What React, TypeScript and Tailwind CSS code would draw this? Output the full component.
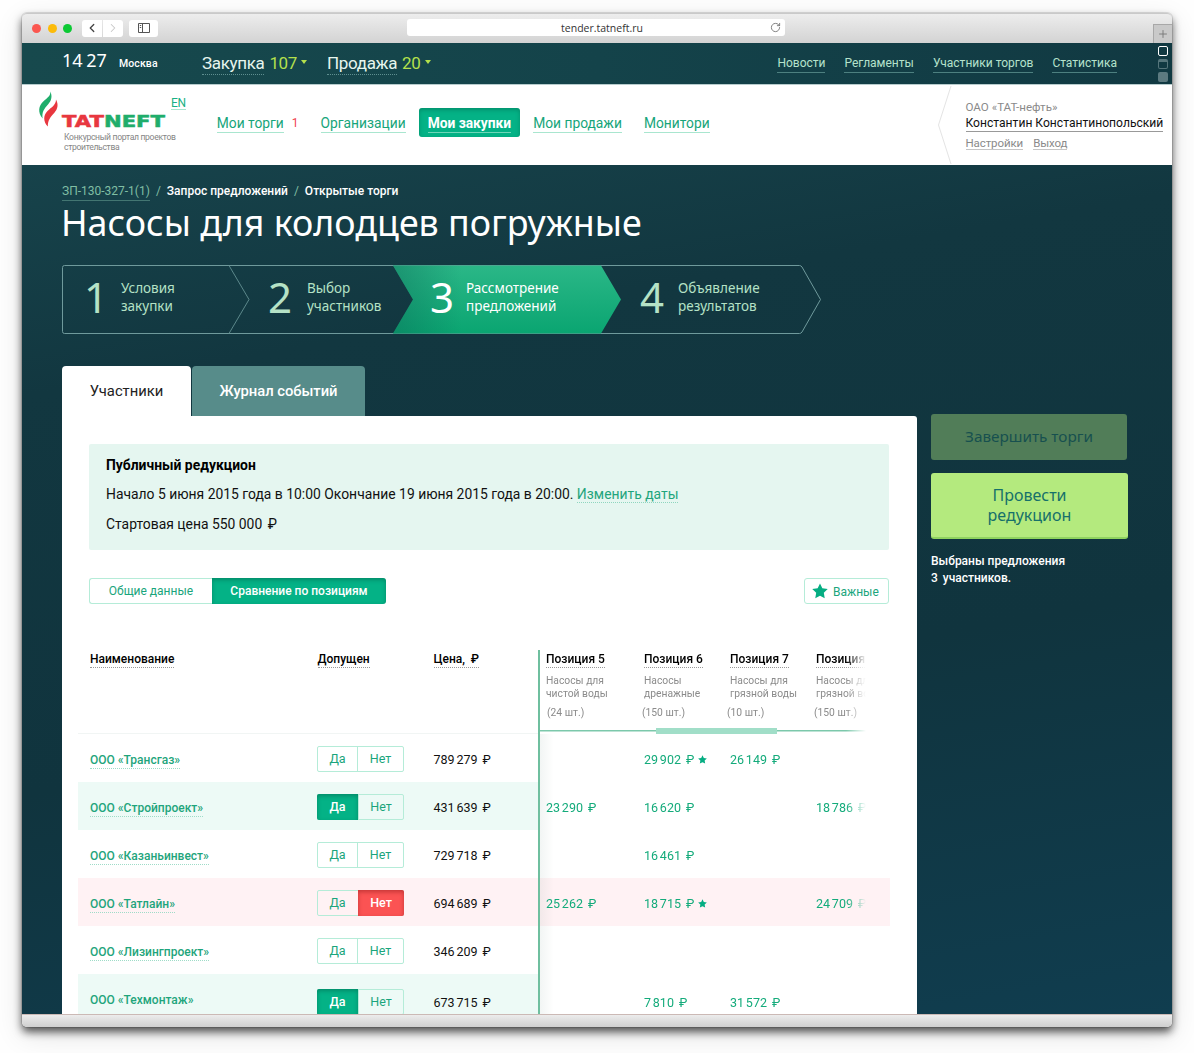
import { ReactNode } from "react";
import { ChevronLeft, ChevronRight, Plus, RotateCw } from "lucide-react";

const company = ["Новости", "Регламенты", "Участники торгов", "Статистика"];

const rows = [
  { name: "ООО «Трансгаз»", price: "789 279", allowed: null, bids: ["", "29 902*", "26 149", ""] },
  { name: "ООО «Стройпроект»", price: "431 639", allowed: true, bids: ["23 290", "16 620", "", "18 786"] },
  { name: "ООО «Казаньинвест»", price: "729 718", allowed: null, bids: ["", "16 461", "", ""] },
  { name: "ООО «Татлайн»", price: "694 689", allowed: false, bids: ["25 262", "18 715*", "", "24 709"] },
  { name: "ООО «Лизингпроект»", price: "346 209", allowed: null, bids: ["", "", "", ""] },
  { name: "ООО «Техмонтаж»", price: "673 715", allowed: true, bids: ["", "7 810", "31 572", ""] },
];

const positions = [
  { title: "Позиция 5", text: ["Насосы для", "чистой воды"], count: "(24 шт.)", shift: "ml-px" },
  { title: "Позиция 6", text: ["Насосы", "дренажные"], count: "(150 шт.)", shift: "-ml-0.5" },
  { title: "Позиция 7", text: ["Насосы для", "грязной воды"], count: "(10 шт.)", shift: "-ml-[3px]" },
  { title: "Позиция 8", text: ["Насосы для", "грязной воды"], count: "(150 шт.)", shift: "-ml-0.5" },
];

const fade = "[mask-image:linear-gradient(to_right,#000_306px,transparent_326px)]";
const exo = "font-['Noto_Sans',sans-serif]";

const Star = ({ className }: { className: string }) => (
  <svg viewBox="0 0 24 24" className={className} fill="currentColor">
    <path d="M12 0.6l3.5 7.4 8.1 1.1-5.9 5.7 1.4 8.1L12 19l-7.1 3.9 1.4-8.1L.4 9.1 8.5 8z" />
  </svg>
);

const Money = ({ children }: { children: ReactNode }) => (
  <span className="whitespace-nowrap text-[12.5px] [word-spacing:-1.3px]">
    {children}
    <span className="ml-[5px]">₽</span>
  </span>
);

const TitleBar = () => (
  <div className="flex h-[30px] shrink-0 rounded-t-[5px] border-t border-[#c9c9c9] bg-gradient-to-b from-[#ededed] to-[#d3d3d3] pl-2.5">
    <div className="flex h-7 items-center">
      <span className="size-[9px] rounded-full bg-[#fb5750]" />
      <span className="ml-[6.5px] size-[9px] rounded-full bg-[#fcbb09]" />
      <span className="ml-[6.5px] size-[9px] rounded-full bg-[#0cc934]" />
      <span className="ml-[10px] flex h-[17px] w-5 items-center justify-center rounded-l-[3px] bg-white">
        <ChevronLeft className="size-3.5 text-[#444]" strokeWidth={2.2} />
      </span>
      <span className="ml-px flex h-[17px] w-5 items-center justify-center rounded-r-[3px] bg-white">
        <ChevronRight className="size-3.5 text-[#c8c8c8]" strokeWidth={1.8} />
      </span>
      <span className="ml-1.5 flex h-[17px] w-[29px] items-center justify-center rounded-[3px] bg-white">
        <svg className="h-2.5 w-3" viewBox="0 0 12 10" fill="none" stroke="#555">
          <path d="M.5.5h11v9H.5zM4.5.5v9M1.8 2.5h1.4M1.8 4.5h1.4" />
        </svg>
      </span>
    </div>
    <div className="ml-[249px] mt-[5px] flex h-[17px] w-[378px] items-center rounded-[3px] bg-white pr-1">
      <span className="ml-[27px] flex-1 pt-0.5 text-center font-['Open_Sans',sans-serif] text-[10.5px] text-[#333]">tender.tatneft.ru</span>
      <RotateCw className="size-[11px] text-[#777]" strokeWidth={2} />
    </div>
    <div className="ml-auto mt-2.5 flex h-[19px] w-[19px] items-center justify-center border-l border-t border-[#a8a8a8] bg-[#c9c9c9]">
      <Plus className="size-3 text-[#777]" strokeWidth={1.8} />
    </div>
  </div>
);

const Counter = ({ label, count }: { label: string; count: number }) => (
  <div className="flex items-start text-[17px] leading-[22px] tracking-[-0.35px]">
    <span className="border-b border-dotted border-[#5f8f90] text-[#e6f5ee]">{label}</span>
    <span className="ml-[5px] text-[#b4e04c]">{count}</span>
    <span className="ml-1 mt-[8px] border-x-[3.5px] border-t-4 border-x-transparent border-t-[#b4e04c]" />
  </div>
);

const TopBar = () => (
  <div className="flex h-[41px] shrink-0 bg-gradient-to-r from-[#17494d] via-[#14434a] to-[#113942] pl-10">
    <span className={`w-[57px] pt-[5px] text-[18px] leading-6 text-white [word-spacing:-1px] ${exo}`}>14 27</span>
    <span className="w-[83px] pt-[13px] text-[10.5px] font-medium leading-4 tracking-[0.1px] text-white">Москва</span>
    <div className="flex gap-[20px] pt-[9px]">
      <Counter label="Закупка" count={107} />
      <Counter label="Продажа" count={20} />
    </div>
    <div className="ml-auto mr-[41px] flex gap-[19px] pt-[12px]">
      {company.map((item) => (
        <a key={item} className="h-[18px] border-b border-[#4d8080] text-[12px] leading-[17px] text-[#b5e2cc]">{item}</a>
      ))}
    </div>
    <div className="flex w-[14px] flex-col gap-[3px] pt-[3px]">
      <span className="size-2.5 rounded-[2px] border border-white" />
      <span className="size-2.5 rounded-[2px] border border-t-[3px] border-[#55757b]" />
      <span className="size-2.5 rounded-[2px] bg-[#5c7a80]" />
    </div>
  </div>
);

const NavLink = ({ children }: { children: ReactNode }) => (
  <a className="h-5 border-b border-[#a9e6cf] text-[13.8px] leading-[20px] text-[#16a57a]">{children}</a>
);

const Header = () => (
  <div className="flex h-[81px] shrink-0 border-t border-[#b7cccd] bg-white pl-4">
    <div className="w-[133px] pt-[6px]">
      <svg width="130" height="42" viewBox="0 0 130 42" overflow="visible">
        <path d="M12.3 0.5C14.6 5.5 13.4 9.6 10.2 13.2C6 17.7 3.6 21.5 4.7 27.5C-.6 21.5 .5 14.6 5.5 10.2C9.3 6.8 12.7 5.2 12.3 .5Z" fill="#1fad6b" />
        <path d="M18 8.5C20.8 14 19.6 18 16.4 21.8C12.6 26 9.5 29.5 9.9 35.6C5 30.5 5.2 24.5 9.5 20C13.5 16.2 18 14 18 8.5Z" fill="#e8373f" />
        <text x="24" y="35.8" textLength="103" lengthAdjust="spacingAndGlyphs" fontSize="15.4" fontWeight="bold" fontFamily="DejaVu Sans" strokeWidth="0.5">
          <tspan fill="#e8373f" stroke="#e8373f">TAT</tspan>
          <tspan fill="#1fad6b" stroke="#1fad6b">NEFT</tspan>
        </text>
      </svg>
      <p className="-mt-px whitespace-nowrap pl-[26px] text-[8.6px] leading-[10px] tracking-[-0.32px] text-[#858585]">
        Конкурсный портал проектов
        <br />
        строительства
      </p>
    </div>
    <a className="mt-[10px] h-[15px] border-b border-[#a9e6cf] text-[12px] leading-[17px] tracking-[-0.3px] text-[#19b184]">EN</a>
    <nav className="ml-[31px] flex pt-[28px]">
      <NavLink>Мои торги</NavLink>
      <span className="ml-2 text-[12px] leading-[21px] text-[#f04450]">1</span>
      <span className="w-[22px]" />
      <NavLink>Организации</NavLink>
      <span className="-mt-[5px] ml-[13px] mr-[13px] flex h-[29px] w-[101.500px] justify-center rounded-[3px] bg-[#04b286] pt-[5px] shadow-[inset_0_2px_4px_rgba(0,80,60,0.35)]">
        <a className="h-5 whitespace-nowrap border-b border-[#6fd6b8] text-[13.8px] font-bold leading-[20px] tracking-[-0.05px] text-white">Мои закупки</a>
      </span>
      <NavLink>Мои продажи</NavLink>
      <span className="w-[22px]" />
      <NavLink>Монитори</NavLink>
    </nav>
    <svg width="16" height="80" viewBox="0 0 16 80" className="ml-auto" fill="none" stroke="#e4e4e4">
      <path d="M14 1L1.500 40L14 79" />
    </svg>
    <div className="w-[219px] whitespace-nowrap pl-[12.500px] pt-[14px] text-[11.6px] leading-4 text-[#8a8a8a]">
      <div>ОАО «ТАТ-нефть»</div>
      <div className="flex">
        <a className="h-[17px] border-b border-[#999] text-[12.1px] leading-[17px] text-[#111]">Константин Константинопольский</a>
      </div>
      <div className="mt-[3px] flex gap-2.5 tracking-[-0.1px]">
        <a className="h-[15px] border-b border-[#c5c5c5] text-[11.500px]">Настройки</a>
        <a className="h-[15px] border-b border-[#c5c5c5] text-[11.500px]">Выход</a>
      </div>
    </div>
  </div>
);

const Step = ({ n, lines, active, className }: { n: number; lines: string[]; active?: boolean; className: string }) => (
  <div className={`relative flex ${className} ${active ? "text-white" : "text-[#b5e2c6]"} ${exo}`}>
    <span className="pt-[8px] text-[42px] leading-[48px]">{n}</span>
    <span className="absolute left-[37px] pt-[15px] text-[13.5px] leading-[17.5px]">
      {lines[0]}
      <br />
      {lines[1]}
    </span>
  </div>
);

const Steps = () => (
  <div className="relative mt-[19px] flex h-[69px] w-[760px]">
    <svg className="absolute inset-0" width="760" height="69" viewBox="0 0 760 69" fill="none">
      <defs>
        <linearGradient id="active" x1="0" y1="0" x2="0" y2="1">
          <stop stopColor="#2bb787" />
          <stop offset="1" stopColor="#0aa571" />
        </linearGradient>
        <linearGradient id="shade" x1="0" x2="1">
          <stop stopColor="#0b6b58" stopOpacity=".45" />
          <stop offset=".3" stopColor="#0b6b58" stopOpacity="0" />
        </linearGradient>
      </defs>
      <path d="M2.500.5H737.500Q739 .5 740 2L758.500 34.500L740 67Q739 68.500 737.500 68.500H2.500Q.5 68.500 .5 66.500V2.500Q.5 .5 2.500 .5Z" stroke="#6f9a9c" />
      <path d="M167 .5L187 34.500L167 68.500" stroke="#5c888b" />
      <path d="M331 .5H539L559 34.500L539 68.500H331L351 34.500Z" fill="url(#active)" />
      <path d="M331 .5H539L559 34.500L539 68.500H331L351 34.500Z" fill="url(#shade)" />
    </svg>
    <Step n={1} lines={["Условия", "закупки"]} className="ml-[22px] w-[184px]" />
    <Step n={2} lines={["Выбор", "участников"]} className="w-[162px] [&>span:last-child]:left-[39px]" />
    <Step n={3} lines={["Рассмотрение", "предложений"]} active className="w-[210px] [&>span:last-child]:left-[36px]" />
    <Step n={4} lines={["Объявление", "результатов"]} className="w-[180px] tracking-[0.05px] [&>span:last-child]:left-[38px]" />
  </div>
);

const YesNo = ({ value }: { value: boolean | null }) => (
  <div className="flex h-[26px] w-[87px] rounded-[2px] border border-[#b5ecd8] text-center text-[12.5px] leading-6 text-[#1aa57c]">
    <span
      className={
        value === true
          ? "-my-px -ml-px w-[41px] rounded-l-[2px] bg-[#04b286] pt-px font-medium text-white shadow-[inset_0_2px_4px_rgba(0,80,60,0.4)]"
          : "w-[39px]"
      }
    >
      Да
    </span>
    <span
      className={
        value === false
          ? "-my-px -mr-px ml-px flex-1 rounded-r-[2px] bg-[#fb5353] pt-px font-medium text-white shadow-[inset_0_2px_4px_rgba(130,20,20,0.45)]"
          : "flex-1 border-l border-[#b5ecd8]"
      }
    >
      Нет
    </span>
  </div>
);

const TableHead = () => (
  <div className="flex h-[84px]">
    <div className="flex w-[460px] border-b border-[#f1f5f4] pl-3 text-[12px] font-medium leading-[18px] text-black">
      <div className="w-[227.500px]"><span className="border-b border-dotted border-[#999] pb-px">Наименование</span></div>
      <div className="w-[116px]"><span className="border-b border-dotted border-[#999] pb-px">Допущен</span></div>
      <div><span className="border-b border-dotted border-[#999] pb-px">Цена, &nbsp;₽</span></div>
    </div>
    <div className="w-[352px] border-l-2 border-[#6fbf9f]">
      <div className={`flex h-full flex-col ${fade}`}>
        <div className="grid grid-cols-[98px_86px_86px_86px] pl-1.5">
          {positions.map((p) => (
            <div key={p.title} className="whitespace-nowrap text-[10.3px] leading-[13px] text-[#8b8b8b]">
              <div className="text-[12px] font-medium leading-[18px] text-black">
                <span className="border-b border-dotted border-[#999] pb-px">{p.title}</span>
              </div>
              <div className="mt-[6px]">{p.text[0]}</div>
              <div>{p.text[1]}</div>
              <div className={`mt-[6px] ${p.shift}`}>{p.count}</div>
            </div>
          ))}
        </div>
        <div className="mt-auto flex h-[7px] items-center bg-[linear-gradient(#7cc8ab,#7cc8ab)] bg-[length:100%_1.5px] bg-center bg-no-repeat">
          <span className="ml-[116px] h-1.5 w-[121px] bg-[#a1dec8]" />
        </div>
      </div>
    </div>
  </div>
);

const Table = () => (
  <div className="mt-[46px] pl-4">
    <TableHead />
    {rows.map((row, i) => {
      const last = i === rows.length - 1;
      const fill = row.allowed === false ? "bg-[#fff2f4]" : "";
      return (
        <div key={row.name} className={`flex h-12 w-[812px] ${fill}`}>
          <div className={`flex w-[460px] pl-3 ${row.allowed ? "bg-[#edfaf6]" : ""}`}>
            <div className="w-[227px] pt-[17px] text-[12px] font-medium leading-[18px] text-[#1fa57c]">
              <span className={last ? "" : "border-b border-dotted border-[#9fdcc8] pb-px"}>{row.name}</span>
            </div>
            <div className={`w-[116.500px] ${last ? "pt-[15px]" : "pt-3"}`}>
              <YesNo value={row.allowed} />
            </div>
            <div className={`leading-[17px] text-[#111] ${last ? "pt-[19px]" : "pt-4"}`}>
              <Money>{row.price}</Money>
            </div>
          </div>
          <div className="w-[352px] border-l-2 border-[#6fbf9f] bg-[linear-gradient(to_right,rgba(0,60,40,0.05),transparent_14px)]">
            <div className={`grid grid-cols-[98px_86px_86px_86px] pl-1.5 leading-[17px] text-[#14ab7b] ${fade} ${last ? "pt-5" : "pt-[17px]"}`}>
              {row.bids.map((bid, k) => (
                <div key={k} className="flex items-center">
                  {bid && <Money>{bid.replace("*", "")}</Money>}
                  {bid.endsWith("*") && <Star className="ml-1 size-[9px] text-[#05ad82]" />}
                </div>
              ))}
            </div>
          </div>
        </div>
      );
    })}
  </div>
);

const Panel = () => (
  <div className="w-[855px]">
    <div className="flex gap-px text-[14.8px] leading-[51px]">
      <span className="h-[50px] w-[129px] rounded-t-[4px] bg-white text-center text-[#222]">Участники</span>
      <span className="h-[50px] w-[173px] rounded-t-[4px] bg-[#578c8a] text-center font-medium tracking-[-0.05px] text-white">Журнал событий</span>
    </div>
    <div className="h-[640px] rounded-tr-[3px] bg-white pt-7">
      <div className="ml-[27px] h-[106px] w-[800px] rounded-[2px] bg-[#e5f6f0] pl-[17px] pt-[11px] text-[13.9px] leading-5 text-[#111]">
        <div className="font-bold text-black">Публичный редукцион</div>
        <div className="mt-[9px]">
          Начало 5 июня 2015 года в 10:00 Окончание 19 июня 2015 года в 20:00.{" "}
          <a className="border-b border-dotted border-[#8fd6bf] text-[#1fa57c]">Изменить даты</a>
        </div>
        <div className="mt-[10px]">
          Стартовая цена 550 000 <span className="ml-0.5">₽</span>
        </div>
      </div>
      <div className="ml-[27px] mt-7 flex w-[800px] text-[12px] leading-6">
        <span className="h-[26px] w-[123px] rounded-l-[3px] border border-r-0 border-[#b5ecd8] text-center text-[#1aa57c]">Общие данные</span>
        <span className="h-[26px] w-[174px] rounded-r-[3px] bg-[#04b286] pt-px text-center font-medium text-white shadow-[inset_0_2px_4px_rgba(0,80,60,0.4)]">Сравнение по позициям</span>
        <span className="ml-auto flex h-[26px] w-[85px] items-center rounded-[3px] border border-[#b5ecd8] pl-[7px] text-[#1aa57c]">
          <Star className="mr-[5px] size-4 text-[#05ad82]" />
          <span className="pt-0.5">Важные</span>
        </span>
      </div>
      <Table />
    </div>
  </div>
);

const Sidebar = () => (
  <div className="ml-3.5 mt-12 w-[197px] text-center">
    <div className={`h-[46px] w-[196px] rounded-[3px] bg-[#517d58] text-[15.3px] leading-[45px] text-[#17504f] ${exo}`}>Завершить торги</div>
    <div className={`mt-[13px] h-[66px] rounded-[3px] border-b-2 border-[#8fd35f] bg-[#b4ea7e] pt-[12px] text-[16px] leading-[20px] text-[#16706a] ${exo}`}>
      Провести
      <br />
      редукцион
    </div>
    <p className="mt-[14px] text-left text-[12px] font-medium leading-[17px] text-white">
      Выбраны предложения
      <br />3 <span className="ml-0.5">участников.</span>
    </p>
  </div>
);

export default function App() {
  return (
    <div className="h-[1053px] w-[1194px] overflow-hidden bg-[#fefefe] pl-[22px] pt-[13px] font-[Roboto,sans-serif]">
      <div className="flex h-[1014px] w-[1150px] flex-col rounded-[5px] shadow-[0_0_0_1px_rgba(0,0,0,0.1),0_5px_9px_rgba(0,0,0,0.65),0_8px_28px_rgba(0,0,0,0.12)]">
        <TitleBar />
        <TopBar />
        <Header />
        <main className="min-h-0 flex-1 overflow-hidden bg-[linear-gradient(170deg,#17434b_0%,#123740_22%,#10343e_60%,#103d4f_100%)] pl-10 pt-[17px]">
          <div className="flex h-[19px] text-[12px] font-medium leading-[19px] text-white">
            <a className="border-b border-[#437672] font-normal text-[#80bfa4]">ЗП-130-327-1(1)</a>
            <span className="mx-1.5 font-normal text-[#80bfa4]">/</span>
            Запрос предложений
            <span className="mx-1.5 font-normal text-[#80bfa4]">/</span>
            Открытые торги
          </div>
          <h1 className={`-ml-px mt-[-2px] h-[47px] text-[35.8px] leading-[47px] text-white ${exo}`}>Насосы для колодцев погружные</h1>
          <Steps />
          <div className="mt-8 flex">
            <Panel />
            <Sidebar />
          </div>
        </main>
        <div className="h-[13px] shrink-0 rounded-b-[5px] border-t border-[#cbb9b5] bg-gradient-to-b from-[#ececec] to-[#cfcfcf]" />
      </div>
    </div>
  );
}
